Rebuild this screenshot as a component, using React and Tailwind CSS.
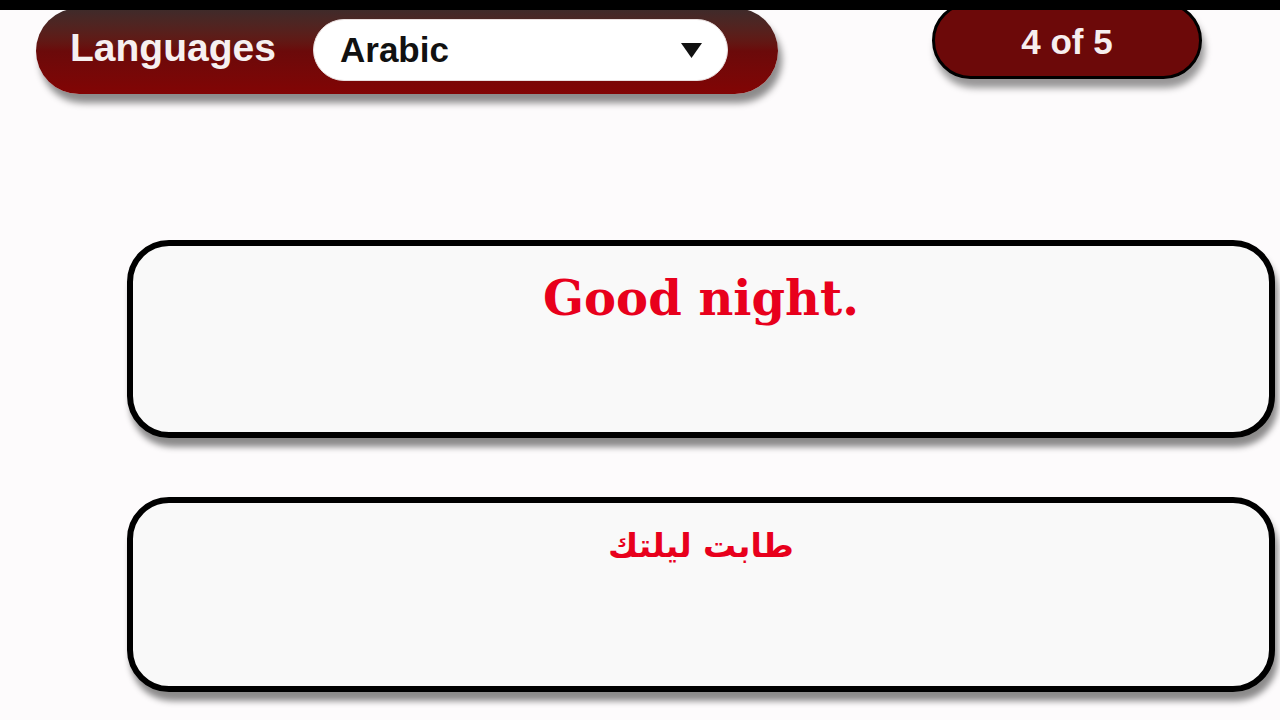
import React, { useState } from 'react';

const phrase = {
  english: 'Good night.',
  translated: 'طابت ليلتك',
};

const App = () => {
  const [language] = useState('Arabic');
  const [index] = useState(4);
  const total = 5;

  return (
    <div className="relative h-[720px] w-full overflow-hidden bg-[#fdfbfc]">
      {/* black strip over the top edge */}
      <div className="absolute left-0 top-0 z-10 h-[10px] w-full bg-black" />

      <div className="flex items-start">
        <div className="ml-[36px] mt-[8px] flex h-[86px] w-[742px] items-center rounded-full bg-linear-to-b from-[#3d2b2b] via-[#6b0a0a] to-[#820404] pl-[34px] shadow-[4px_9px_7px_rgba(0,0,0,0.45)]">
          <span className="-mt-[8px] w-[243px] font-['Liberation_Sans',Arial,sans-serif] text-[39px] font-bold leading-none text-[#f6f0f0]">
            Languages
          </span>
          <div className="-mt-[3px] flex h-[62px] w-[415px] items-center justify-between rounded-full border border-[#e8dede] bg-white pl-[26px] pr-[25px]">
            <span className="font-['Liberation_Sans',Arial,sans-serif] text-[35px] font-bold leading-none text-[#111]">
              {language}
            </span>
            <svg width="21" height="15" viewBox="0 0 21 15" className="mt-[2px]">
              <polygon points="0,0 21,0 10.5,15" fill="#111" />
            </svg>
          </div>
        </div>

        <div className="ml-[154px] mt-[2px] flex h-[77px] w-[270px] items-center justify-center rounded-full border-[3px] border-black bg-[#6c0909] shadow-[3px_9px_7px_rgba(0,0,0,0.4)]">
          <span className="mt-[2px] font-['Liberation_Sans',Arial,sans-serif] text-[35px] font-bold leading-none text-[#f7efef]">
            {index} of {total}
          </span>
        </div>
      </div>

      <div className="mt-[146px] flex flex-col pl-[127px] pr-[5px]">
        <div className="h-[198px] rounded-[42px] border-[6px] border-black bg-[#f9f9f9] pt-[28px] text-center shadow-[3px_9px_6px_rgba(0,0,0,0.45)]">
          <p className="font-['DejaVu_Serif',Georgia,serif] text-[48px] font-bold leading-none text-[#e8001c]">
            {phrase.english}
          </p>
        </div>
        <div className="mt-[59px] h-[195px] rounded-[42px] border-[6px] border-black bg-[#f9f9f9] pt-[26px] text-center shadow-[3px_9px_6px_rgba(0,0,0,0.45)]">
          <p dir="rtl" className="font-['DejaVu_Sans',sans-serif] text-[33px] font-bold leading-none text-[#e8001c]">
            {phrase.translated}
          </p>
        </div>
      </div>
    </div>
  );
};

export default App;
